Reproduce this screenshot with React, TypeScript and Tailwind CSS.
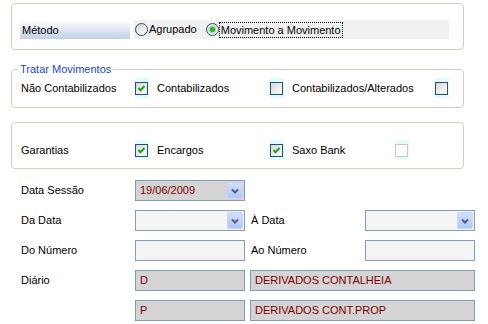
import React from 'react';

const Check = ({ checked = false, disabled = false }: { checked?: boolean; disabled?: boolean }) => (
  <div className="flex h-[20px] w-[14px] items-center bg-[#e4fbfb]">
    <div
      className={
        disabled
          ? 'flex h-[13px] w-[13px] items-center justify-center border border-[#cac8bb] bg-white'
          : 'flex h-[13px] w-[13px] items-center justify-center border border-[#1c5180] bg-linear-to-br from-[#d8d8d0] to-white'
      }
    >
      {checked && (
        <svg width="11" height="11" viewBox="0 0 11 11">
          <path d="M2.5 5 L4.5 7.2 L8.5 3" fill="none" stroke="#21a121" strokeWidth="2" />
        </svg>
      )}
    </div>
  </div>
);

const Radio = ({ checked = false }: { checked?: boolean }) => (
  <div className="flex h-[13px] w-[13px] items-center justify-center rounded-full border border-[#1c5180] bg-linear-to-br from-[#d8d8d0] to-white">
    {checked && <div className="h-[5px] w-[5px] rounded-full bg-[#2bb12b] shadow-[0_0_0_1px_#8fdc8f]" />}
  </div>
);

const Combo = ({ value = '', readOnly = false }: { value?: string; readOnly?: boolean }) => (
  <div
    className={
      'flex h-[21px] w-[110px] items-center justify-between border border-[#7f9db9] pl-[4px] pr-[1px] text-[#800000] ' +
      (readOnly ? 'bg-[#d4d4d4]' : 'bg-[#f4f4f4]')
    }
  >
    <span>{value}</span>
    <div className="flex h-[17px] w-[16px] items-center justify-center rounded-[2px] border border-[#c9d7f7] bg-linear-to-b from-[#d2defc] to-[#b3c6f5]">
      <svg width="8" height="6" viewBox="0 0 8 6">
        <path d="M1 1.5 L4 4.5 L7 1.5" fill="none" stroke="#4d6185" strokeWidth="2" />
      </svg>
    </div>
  </div>
);

const Box = ({ value = '', width = 'w-[110px]', readOnly = false }: { value?: string; width?: string; readOnly?: boolean }) => (
  <div
    className={
      'flex h-[21px] items-center border border-[#7f9db9] pl-[4px] text-[#800000] ' +
      width +
      (readOnly ? ' bg-[#d4d4d4]' : ' bg-[#f4f4f4]')
    }
  >
    {value}
  </div>
);

const CheckRow = ({
  label,
  items,
}: {
  label: string;
  items: { text: string; checked: boolean }[];
}) => (
  <div className="flex h-[20px] items-center">
    <span className="w-[114px]">{label}</span>
    <Check checked={items[0].checked} />
    <span className="ml-[8px] w-[113px]">{items[0].text}</span>
    <Check checked={items[1].checked} />
    <span className="ml-[8px] w-[143px]">{items[1].text}</span>
  </div>
);

const App = () => {
  return (
    <div className="h-[324px] w-[488px] overflow-hidden bg-white pl-[11px] pt-[3px] font-['Liberation_Sans',Arial,sans-serif] text-[11px] text-black">
      {/* Método */}
      <div className="h-[47px] w-[453px] rounded-[4px] border border-[#d0d0bf] pl-[8px] pt-[16px]">
        <div className="flex">
          <div className="flex h-[19px] w-[110px] items-center bg-linear-to-b from-white to-[#c3d0e8] pl-[2px] pt-[1px]">
            Método
          </div>
          <div className="ml-[4px] flex h-[19px] w-[315px] items-center bg-[#f1f1f1] pl-[1px]">
            <Radio />
            <span className="ml-[1px]">Agrupado</span>
            <div className="ml-[9px]">
              <Radio checked />
            </div>
            <span className="ml-[0px] border border-dotted border-black px-[1px] leading-[14px]">
              Movimento a Movimento
            </span>
          </div>
        </div>
      </div>

      {/* Tratar Movimentos */}
      <fieldset className="mt-[13px] h-[45px] w-[453px] rounded-[4px] border border-[#d0d0bf] pl-[9px]">
        <legend className="ml-[-3px] px-[2px] leading-[13px] text-[#1848d0]">Tratar Movimentos</legend>
        <div className="mt-[2px] flex items-center">
          <CheckRow
            label="Não Contabilizados"
            items={[
              { text: 'Contabilizados', checked: true },
              { text: 'Contabilizados/Alterados', checked: false },
            ]}
          />
          <Check />
        </div>
      </fieldset>

      {/* Garantias */}
      <div className="mt-[14px] h-[47px] w-[453px] rounded-[4px] border border-[#d0d0bf] pl-[9px] pt-[17px]">
        <div className="flex items-center">
          <span className="w-[114px]">Garantias</span>
          <Check checked />
          <span className="ml-[8px] w-[113px]">Encargos</span>
          <Check checked />
          <span className="ml-[8px] w-[103px]">Saxo Bank</span>
          <Check disabled />
        </div>
      </div>

      {/* form */}
      <div className="mt-[11px] flex flex-col gap-[9px] pl-[10px]">
        <div className="flex items-center">
          <span className="w-[114px]">Data Sessão</span>
          <Combo value="19/06/2009" readOnly />
        </div>
        <div className="flex items-center">
          <span className="w-[114px]">Da Data</span>
          <Combo />
          <span className="ml-[6px] w-[114px]">À Data</span>
          <Combo />
        </div>
        <div className="flex items-center">
          <span className="w-[114px]">Do Número</span>
          <Box />
          <span className="ml-[6px] w-[114px]">Ao Número</span>
          <Box />
        </div>
        <div className="flex items-center">
          <span className="w-[114px]">Diário</span>
          <Box value="D" readOnly />
          <div className="ml-[5px]">
            <Box value="DERIVADOS CONTALHEIA" width="w-[225px]" readOnly />
          </div>
        </div>
        <div className="flex items-center">
          <span className="w-[114px]"></span>
          <Box value="P" readOnly />
          <div className="ml-[5px]">
            <Box value="DERIVADOS CONT.PROP" width="w-[225px]" readOnly />
          </div>
        </div>
      </div>
    </div>
  );
};

export default App;
